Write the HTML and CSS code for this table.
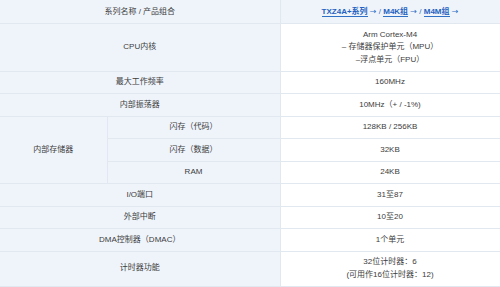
FILE: index.html
```html
<!DOCTYPE html>
<html lang="zh">
<head>
<meta charset="utf-8">
<link rel="stylesheet" href="styles.css">
</head>
<body>
<table class="spec">
  <colgroup>
    <col class="c1"><col class="c2"><col class="c3">
  </colgroup>
  <tr class="head">
    <th colspan="2" class="lab">系列名称 / 产品组合</th>
    <th class="lab hv"><a class="lnk">TXZ4A+系列</a> <span class="arr">→</span> / <a class="lnk">M4K组</a> <span class="arr">→</span> / <a class="lnk">M4M组</a> <span class="arr">→</span></th>
  </tr>
  <tr>
    <td colspan="2" class="lab">CPU内核</td>
    <td class="val multi">Arm Cortex-M4<br>– 存储器保护单元（MPU）<br>–浮点单元（FPU）</td>
  </tr>
  <tr>
    <td colspan="2" class="lab">最大工作频率</td>
    <td class="val">160MHz</td>
  </tr>
  <tr>
    <td colspan="2" class="lab">内部振荡器</td>
    <td class="val">10MHz（+ / -1%)</td>
  </tr>
  <tr>
    <td rowspan="3" class="lab">内部存储器</td>
    <td class="lab">闪存（代码）</td>
    <td class="val">128KB / 256KB</td>
  </tr>
  <tr>
    <td class="lab">闪存（数据）</td>
    <td class="val">32KB</td>
  </tr>
  <tr>
    <td class="lab">RAM</td>
    <td class="val">24KB</td>
  </tr>
  <tr>
    <td colspan="2" class="lab">I/O端口</td>
    <td class="val">31至87</td>
  </tr>
  <tr>
    <td colspan="2" class="lab">外部中断</td>
    <td class="val">10至20</td>
  </tr>
  <tr>
    <td colspan="2" class="lab">DMA控制器（DMAC）</td>
    <td class="val">1个单元</td>
  </tr>
  <tr>
    <td colspan="2" class="lab">计时器功能</td>
    <td class="val multi">32位计时器：6<br>(可用作16位计时器：12)</td>
  </tr>
</table>
</body>
</html>
```

FILE: styles.css
```css
html, body {
  margin: 0;
  padding: 0;
  background: #ffffff;
}

.spec {
  width: 500px;
  border-collapse: collapse;
  table-layout: fixed;
  font-family: "Liberation Sans", "Noto Sans CJK SC", sans-serif;
  font-size: 8px;
  color: #3c3c3c;
}

.c1 { width: 107px; }
.c2 { width: 173px; }
.c3 { width: 220px; }

.spec th,
.spec td {
  text-align: center;
  vertical-align: middle;
  font-weight: normal;
  line-height: 12.5px;
  padding: 4.5px 2px;
  border-bottom: 1px solid #e2e8f0;
  border-right: 1px solid #e2e8f0;
}

.spec .head th {
  padding: 5.5px 2px 5px;
}

.lab {
  background: #eff4fb;
}

.val {
  background: #ffffff;
}

.multi {
  line-height: 13px;
}

.hv {
  color: #2f6fc4;
}

.lnk {
  color: #1f62c0;
  font-weight: bold;
  text-decoration: none;
  border-bottom: 1.5px solid #2f6fc4;
}

.arr {
  color: #2f6fc4;
  font-family: "DejaVu Sans", sans-serif;
  font-size: 8px;
}
```
